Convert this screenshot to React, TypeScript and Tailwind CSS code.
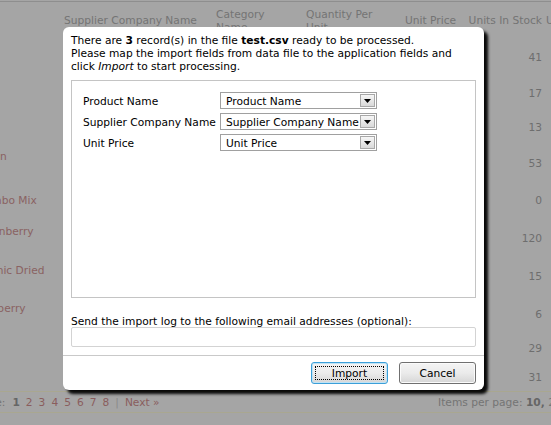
import React from "react";

type Row = { h: number; name: string[]; stock: string };

const rows: Row[] = [
  { h: 37, name: ["Chai"], stock: "41" },
  { h: 34, name: ["Chang"], stock: "17" },
  { h: 35, name: ["Aniseed Syrup"], stock: "13" },
  { h: 36, name: ["Chef Anton's Cajun", "Seasoning"], stock: "53" },
  { h: 38, name: ["Chef Anton's Gumbo Mix"], stock: "0" },
  { h: 38, name: ["Grandma's Boysenberry", "Spread"], stock: "120" },
  { h: 39, name: ["Uncle Bob's Organic Dried", "Pears"], stock: "15" },
  { h: 37, name: ["Northwoods Cranberry", "Sauce"], stock: "6" },
  { h: 31, name: ["Mishi Kobe Niku"], stock: "29" },
  { h: 27, name: ["Ikura"], stock: "31" },
];

const fields = [
  { label: "Product Name", value: "Product Name" },
  { label: "Supplier Company Name", value: "Supplier Company Name" },
  { label: "Unit Price", value: "Unit Price" },
];

function Select({ value }: { value: string }) {
  return (
    <div className="flex h-[17px] w-[157px] items-center border border-[#a0a0a0] bg-white">
      <span className="flex-1 overflow-hidden whitespace-nowrap pl-[5px] pt-[1px] leading-[13px] text-black">
        {value}
      </span>
      <span className="mr-[1px] flex h-[13px] w-[15px] shrink-0 items-center justify-center border border-[#a8a8a8] bg-gradient-to-b from-[#f6f6f6] to-[#d9d9d9]">
        <svg width="7" height="4" viewBox="0 0 7 4">
          <path d="M0 0h7L3.5 4z" fill="#000" />
        </svg>
      </span>
    </div>
  );
}

function Button({ label, focused }: { label: string; focused?: boolean }) {
  return (
    <button
      className={
        "relative h-[22px] w-[77px] rounded-[3px] border bg-gradient-to-b from-[#f4f4f4] via-[#ebebeb] to-[#d6d6d6] text-black " +
        (focused
          ? "border-[#3c9fd8] shadow-[inset_0_0_0_1px_#bfe3f6]"
          : "border-[#707070] shadow-[inset_0_0_0_1px_#fbfbfb]")
      }
    >
      {focused && (
        <span className="pointer-events-none absolute inset-[3px] border border-dotted border-black" />
      )}
      <span className="relative leading-[13px]">{label}</span>
    </button>
  );
}

export default function App() {
  return (
    <div className="relative h-[425px] w-[551px] overflow-hidden bg-[#a5a5a5] pt-[1px] font-['DejaVu_Sans',sans-serif] text-[10.67px] leading-[13px]">
      {/* product grid behind the modal */}
      <div className="border-t border-[#8e8e8e]">
        <div className="flex h-[37px] items-center whitespace-nowrap text-[#747474]">
          <div className="-ml-[95px] w-[159px] shrink-0">Product Name</div>
          <div className="w-[152px] shrink-0">Supplier Company Name</div>
          <div className="w-[90px] shrink-0 whitespace-normal pr-[30px]">Category Name</div>
          <div className="w-[99px] shrink-0 whitespace-normal pr-[20px]">Quantity Per Unit</div>
          <div className="w-[55px] shrink-0">Unit Price</div>
          <div className="w-[86px] shrink-0 pr-[4px] text-right">Units In Stock</div>
          <div className="shrink-0">Units On Order</div>
        </div>
        {rows.map((r) => (
          <div key={r.stock + r.name[0]} className="flex items-center" style={{ height: r.h }}>
            <div className="-ml-[95px] flex w-[159px] shrink-0 flex-col whitespace-nowrap text-[#8a6262]">
              <span>{r.name[0]}</span>
              {r.name[1] && <span>{r.name[1]}</span>}
            </div>
            <div className="w-[396px] shrink-0" />
            <div className="w-[86px] shrink-0 pr-[4px] text-right text-[#6e6e6e]">{r.stock}</div>
          </div>
        ))}
        <div className="flex h-[22px] items-center whitespace-nowrap border-y border-[#a9a790]">
          <div className="-ml-[24px] flex w-[462px] shrink-0 items-center gap-[6px] text-[#8a5d5d]">
            <span className="mr-[1px] text-[#747474]">Page:</span>
            <span className="font-bold text-[#666]">1</span>
            <span>2</span>
            <span>3</span>
            <span>4</span>
            <span>5</span>
            <span>6</span>
            <span>7</span>
            <span>8</span>
            <span className="text-[#8a8a8a]">|</span>
            <span>Next »</span>
          </div>
          <div className="shrink-0 text-[#747474]">
            Items per page: <span className="font-bold text-[#666]">10,</span> 20, 50
          </div>
        </div>
      </div>

      {/* import modal */}
      <div className="absolute left-[63px] top-[27px] flex h-[363px] w-[421px] flex-col rounded-[6px] bg-white text-black shadow-[4px_4px_3px_rgba(0,0,0,0.95)]">
        <div className="flex flex-col px-[8px] pt-[7px]">
          <p className="whitespace-nowrap">
            There are <b>3</b> record(s) in the file <b>test.csv</b> ready to be processed.
            <br />
            Please map the import fields from data file to the application fields and
            <br />
            click <i>Import</i> to start processing.
          </p>
          <div className="mt-[7px] flex h-[218px] flex-col gap-[4px] border border-[#c4c4c4] pl-[11px] pt-[11px]">
            {fields.map((f) => (
              <div key={f.label} className="flex items-center">
                <span className="w-[137px] shrink-0 whitespace-nowrap pt-[1px]">{f.label}</span>
                <Select value={f.value} />
              </div>
            ))}
          </div>
          <label className="mt-[17px] whitespace-nowrap">
            Send the import log to the following email addresses (optional):
          </label>
          <div className="-mt-[1px] h-[20px] rounded-[2px] border border-[#d3d3d3] bg-white" />
        </div>
        <div className="mt-[8px] flex justify-end gap-[11px] border-t border-[#c9c9c9] pr-[8px] pt-[6px]">
          <Button label="Import" focused />
          <Button label="Cancel" />
        </div>
      </div>
    </div>
  );
}
